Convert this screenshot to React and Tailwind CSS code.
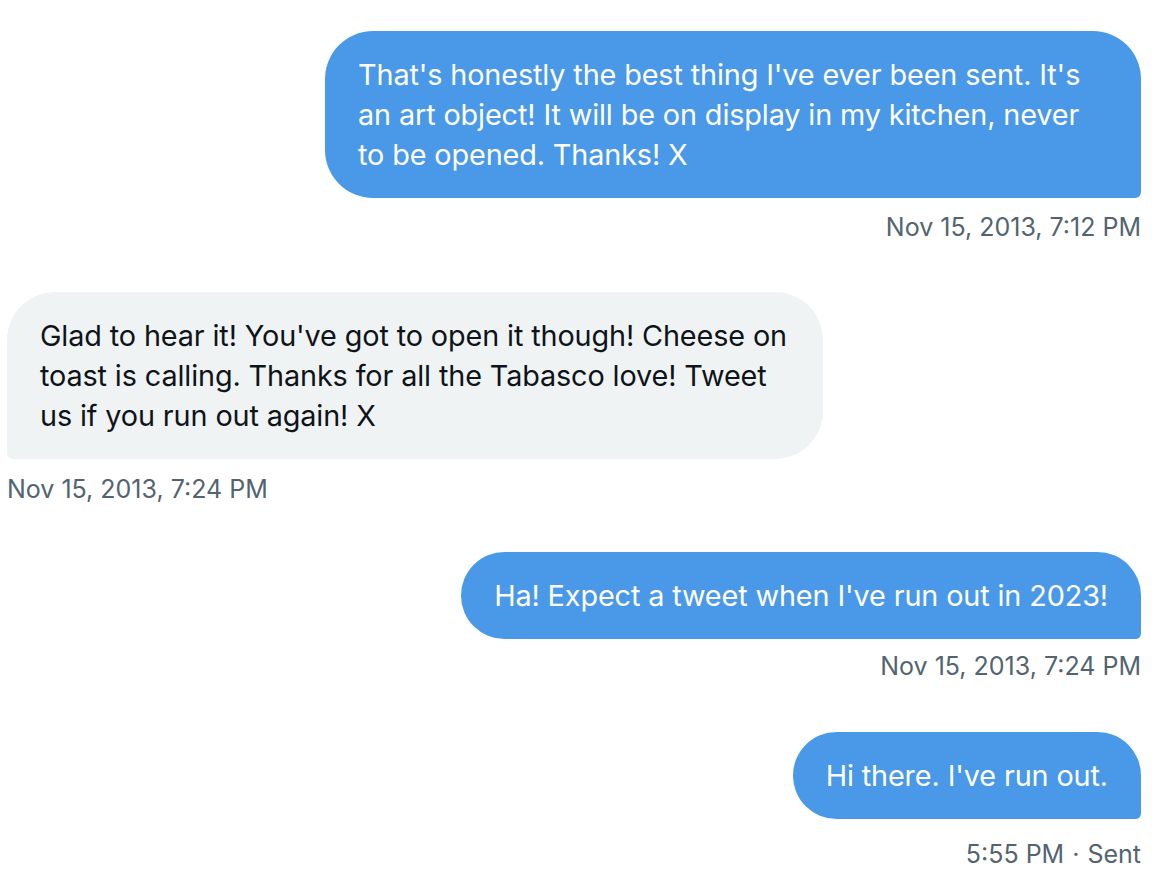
const messages = [
  {
    id: 1,
    mine: true,
    text: "That's honestly the best thing I've ever been sent. It's an art object! It will be on display in my kitchen, never to be opened. Thanks! X",
    time: "Nov 15, 2013, 7:12 PM",
    gap: "mt-0",
    metaGap: "mt-[13px]",
  },
  {
    id: 2,
    mine: false,
    text: "Glad to hear it! You've got to open it though! Cheese on toast is calling. Thanks for all the Tabasco love! Tweet us if you run out again! X",
    time: "Nov 15, 2013, 7:24 PM",
    gap: "mt-[49px]",
    metaGap: "mt-[14px]",
  },
  {
    id: 3,
    mine: true,
    text: "Ha! Expect a tweet when I've run out in 2023!",
    time: "Nov 15, 2013, 7:24 PM",
    gap: "mt-[47px]",
    metaGap: "mt-[11px]",
  },
  {
    id: 4,
    mine: true,
    text: "Hi there. I've run out.",
    time: "5:55 PM",
    sent: true,
    gap: "mt-[50px]",
    metaGap: "mt-[19px]",
  },
];

function Message({ msg }) {
  return (
    <div className={`flex flex-col ${msg.mine ? "items-end" : "items-start"} ${msg.gap}`}>
      <div
        className={
          msg.mine
            ? "max-w-[816px] rounded-[48px] rounded-br-[6px] bg-[#4a99e8] px-[33px] py-[23.5px] text-[28.8px] leading-[40px] tracking-[-0.12px] text-white"
            : "max-w-[816px] rounded-[48px] rounded-bl-[6px] bg-[#eff3f4] pl-[33px] pr-[30px] py-[23.5px] text-[28.8px] leading-[40px] tracking-[-0.12px] text-[#0f1419]"
        }
      >
        {msg.text}
      </div>
      <p className={`${msg.metaGap} text-[25px] leading-[32px] text-[#536471]`}>
        {msg.time}
        {msg.sent && (
          <>
            <span className="mx-[8px]">·</span>Sent
          </>
        )}
      </p>
    </div>
  );
}

export default function App() {
  return (
    <div
      className="min-h-screen bg-white pb-4 pl-[7px] pr-[25px] pt-[31px]"
      style={{ fontFamily: "Inter, 'Noto Sans', sans-serif" }}
    >
      {messages.map((m) => (
        <Message key={m.id} msg={m} />
      ))}
    </div>
  );
}
